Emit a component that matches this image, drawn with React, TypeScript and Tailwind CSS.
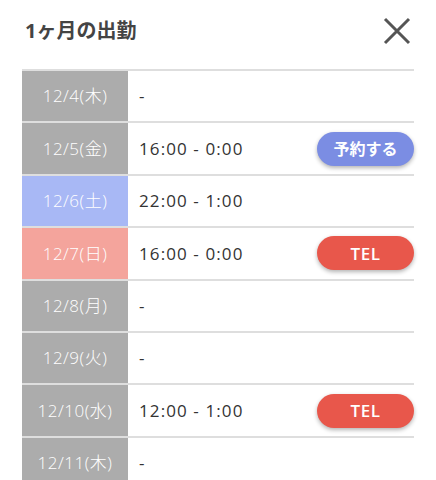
import React from 'react';

type Shift = {
  date: string;
  time: string;
  tone: 'weekday' | 'sat' | 'sun';
  action?: 'reserve' | 'tel';
};

const shifts: Shift[] = [
  { date: '12/4(木)', time: '-', tone: 'weekday' },
  { date: '12/5(金)', time: '16:00 - 0:00', tone: 'weekday', action: 'reserve' },
  { date: '12/6(土)', time: '22:00 - 1:00', tone: 'sat' },
  { date: '12/7(日)', time: '16:00 - 0:00', tone: 'sun', action: 'tel' },
  { date: '12/8(月)', time: '-', tone: 'weekday' },
  { date: '12/9(火)', time: '-', tone: 'weekday' },
  { date: '12/10(水)', time: '12:00 - 1:00', tone: 'weekday', action: 'tel' },
  { date: '12/11(木)', time: '-', tone: 'weekday' },
];

const toneClass = {
  weekday: 'bg-[#acacac]',
  sat: 'bg-[#a8b8f5]',
  sun: 'bg-[#f4a49c]',
};

const ShiftRow: React.FC<{ shift: Shift }> = ({ shift }) => (
  <div className="flex h-[52.4px] border-b-2 border-[#dedede]">
    <div
      className={`w-[106px] shrink-0 flex items-center justify-center text-[17px] font-light tracking-[0.5px] text-white ${toneClass[shift.tone]}`}
    >
      {shift.date}
    </div>
    <div className="flex-1 flex items-center justify-between pl-[11px]">
      <span className="text-[17px] tracking-[1.1px] text-[#333]">{shift.time}</span>
      {shift.action === 'reserve' && (
        <button className="w-[97px] h-[34px] rounded-full bg-[#7b8de3] text-white text-[16px] font-bold shadow-[0_2px_4px_rgba(0,0,0,0.3)]">
          予約する
        </button>
      )}
      {shift.action === 'tel' && (
        <button className="w-[97px] h-[34px] rounded-full bg-[#e8574b] text-white text-[17px] font-semibold tracking-[0.5px] shadow-[0_2px_4px_rgba(0,0,0,0.3)]">
          TEL
        </button>
      )}
    </div>
  </div>
);

const App: React.FC = () => {
  return (
    <div
      className="w-[436px] h-[480px] overflow-hidden bg-white"
      style={{ fontFamily: '"Open Sans", "Noto Sans CJK JP", sans-serif' }}
    >
      <div className="flex items-center justify-between pl-[25px] pr-[24px] h-[62px]">
        <h2 className="text-[20px] font-bold text-[#444]">1ヶ月の出勤</h2>
        <svg width="30" height="30" viewBox="0 0 30 30" className="mt-[-1px]">
          <path d="M3 3 L27 27 M27 3 L3 27" stroke="#555" strokeWidth="3" />
        </svg>
      </div>
      <div className="ml-[22px] mr-[22px] mt-[7px] border-t-2 border-[#dedede]">
        {shifts.map((s) => (
          <ShiftRow key={s.date} shift={s} />
        ))}
      </div>
    </div>
  );
};

export default App;
